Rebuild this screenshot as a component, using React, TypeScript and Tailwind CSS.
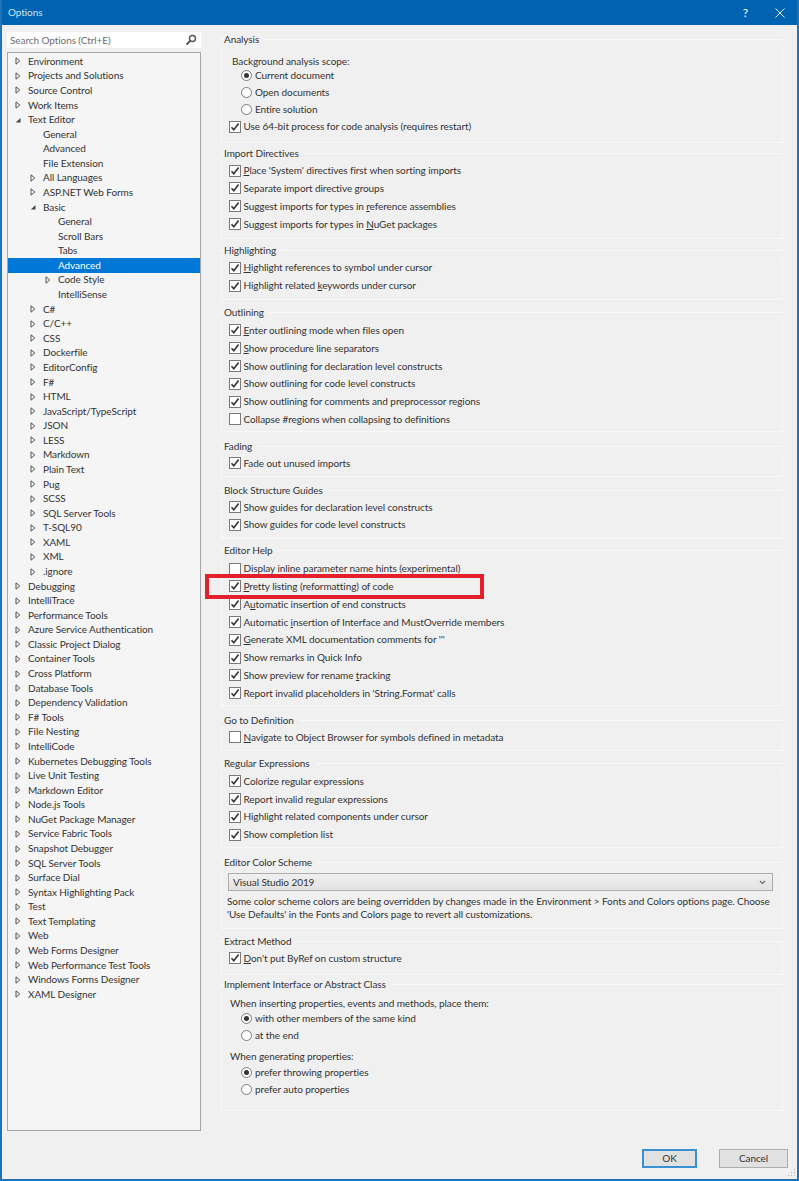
import type { ReactNode } from 'react';

const treeItems: [string, number, string?, boolean?][] = [
  ['Environment', 0, 'closed'],
  ['Projects and Solutions', 0, 'closed'],
  ['Source Control', 0, 'closed'],
  ['Work Items', 0, 'closed'],
  ['Text Editor', 0, 'open'],
  ['General', 1],
  ['Advanced', 1],
  ['File Extension', 1],
  ['All Languages', 1, 'closed'],
  ['ASP.NET Web Forms', 1, 'closed'],
  ['Basic', 1, 'open'],
  ['General', 2],
  ['Scroll Bars', 2],
  ['Tabs', 2],
  ['Advanced', 2, undefined, true],
  ['Code Style', 2, 'closed'],
  ['IntelliSense', 2],
  ['C#', 1, 'closed'],
  ['C/C++', 1, 'closed'],
  ['CSS', 1, 'closed'],
  ['Dockerfile', 1, 'closed'],
  ['EditorConfig', 1, 'closed'],
  ['F#', 1, 'closed'],
  ['HTML', 1, 'closed'],
  ['JavaScript/TypeScript', 1, 'closed'],
  ['JSON', 1, 'closed'],
  ['LESS', 1, 'closed'],
  ['Markdown', 1, 'closed'],
  ['Plain Text', 1, 'closed'],
  ['Pug', 1, 'closed'],
  ['SCSS', 1, 'closed'],
  ['SQL Server Tools', 1, 'closed'],
  ['T-SQL90', 1, 'closed'],
  ['XAML', 1, 'closed'],
  ['XML', 1, 'closed'],
  ['.ignore', 1, 'closed'],
  ['Debugging', 0, 'closed'],
  ['IntelliTrace', 0, 'closed'],
  ['Performance Tools', 0, 'closed'],
  ['Azure Service Authentication', 0, 'closed'],
  ['Classic Project Dialog', 0, 'closed'],
  ['Container Tools', 0, 'closed'],
  ['Cross Platform', 0, 'closed'],
  ['Database Tools', 0, 'closed'],
  ['Dependency Validation', 0, 'closed'],
  ['F# Tools', 0, 'closed'],
  ['File Nesting', 0, 'closed'],
  ['IntelliCode', 0, 'closed'],
  ['Kubernetes Debugging Tools', 0, 'closed'],
  ['Live Unit Testing', 0, 'closed'],
  ['Markdown Editor', 0, 'closed'],
  ['Node.js Tools', 0, 'closed'],
  ['NuGet Package Manager', 0, 'closed'],
  ['Service Fabric Tools', 0, 'closed'],
  ['Snapshot Debugger', 0, 'closed'],
  ['SQL Server Tools', 0, 'closed'],
  ['Surface Dial', 0, 'closed'],
  ['Syntax Highlighting Pack', 0, 'closed'],
  ['Test', 0, 'closed'],
  ['Text Templating', 0, 'closed'],
  ['Web', 0, 'closed'],
  ['Web Forms Designer', 0, 'closed'],
  ['Web Performance Test Tools', 0, 'closed'],
  ['Windows Forms Designer', 0, 'closed'],
  ['XAML Designer', 0, 'closed'],
];

// "&" marks the access key letter
const Label = ({ text }: { text: string }) => {
  const i = text.indexOf('&');
  if (i < 0) return <span>{text}</span>;
  return (
    <span>
      {text.slice(0, i)}
      <span className="underline">{text[i + 1]}</span>
      {text.slice(i + 2)}
    </span>
  );
};

const Check = ({ label, off }: { label: string; off?: boolean }) => (
  <div className="flex h-[17.8px] items-center pl-[7px]">
    <div className="flex h-[12px] w-[12px] items-center justify-center border border-[#7a7a7a] bg-white">
      {!off && (
        <svg width="10" height="10" viewBox="0 0 10 10" fill="none">
          <path d="M1.5 5.2 L3.8 7.8 L8.6 1.6" stroke="#333" strokeWidth="1.6" />
        </svg>
      )}
    </div>
    <div className="ml-[2.5px] whitespace-nowrap">
      <Label text={label} />
    </div>
  </div>
);

const Radio = ({ label, on }: { label: string; on?: boolean }) => (
  <div className="flex h-[17px] items-center pl-[19px]">
    <div className="flex h-[11px] w-[11px] items-center justify-center rounded-full border border-[#7a7a7a] bg-white">
      {on && <div className="h-[5px] w-[5px] rounded-full bg-[#333]" />}
    </div>
    <div className="ml-[3px] whitespace-nowrap">{label}</div>
  </div>
);

const Group = ({
  title,
  children,
  className,
}: {
  title: string;
  children: ReactNode;
  className?: string;
}) => (
  <div className={className}>
    <div className="flex h-[14px] items-center">
      <div className="h-px w-[3px] bg-[#fafafa]" />
      <div className="whitespace-nowrap pr-[5px]">{title}</div>
      <div className="h-px flex-1 bg-[#fafafa]" />
    </div>
    <div className="border-x border-b border-[#f8f8f8]">{children}</div>
  </div>
);

const TreeRow = ({ item }: { item: (typeof treeItems)[number] }) => {
  const [name, level, arrow, selected] = item;
  const indentClass = level === 0 ? 'pl-[4px]' : level === 1 ? 'pl-[19px]' : 'pl-[34px]';
  return (
    <div
      className={`flex h-[14.58px] items-center ${indentClass} ${
        selected ? 'bg-[#0078d7] text-white' : ''
      }`}
    >
      <div className="flex w-[16px] shrink-0 justify-start pl-[3px]">
        {arrow === 'closed' && (
          <svg width="6" height="8" viewBox="0 0 6 8" fill="none">
            <path d="M1 .8 L4.8 4 L1 7.2 Z" stroke="#555" strokeWidth="1" />
          </svg>
        )}
        {arrow === 'open' && (
          <svg width="6" height="8" viewBox="0 0 6 8">
            <path d="M5.5 2 V6.5 H.8 Z" fill="#444" />
          </svg>
        )}
      </div>
      <div className="whitespace-nowrap">{name}</div>
    </div>
  );
};

export default function App() {
  return (
    <div className="relative flex h-[1181px] w-[799px] flex-col overflow-hidden border-x-2 border-b-2 border-[#1f74b8] bg-[#f0f0f0] font-['Lato','Open_Sans',sans-serif] text-[10px] leading-[13px] tracking-[-0.08px] text-[#333]">
      <div className="-mx-[2px] flex h-[25px] shrink-0 items-center justify-between bg-[#0063b1] pl-[8px] pr-[14px] text-[#cfe3f5]">
        <div>Options</div>
        <div className="flex items-center gap-[27px] text-white">
          <span className="text-[12px]">?</span>
          <svg width="10" height="10" viewBox="0 0 10 10" fill="none">
            <path d="M.5 .5 L9.5 9.5 M9.5 .5 L.5 9.5" stroke="#e8f1f9" strokeWidth="1" />
          </svg>
        </div>
      </div>

      <div className="flex flex-1 pl-[5px] pr-[14px]">
        <div className="flex w-[194px] shrink-0 flex-col pt-[7px]">
          <div className="flex h-[16px] items-center justify-between bg-white pl-[3px] pr-[4px] text-[#6d6d6d]">
            <span>Search Options (Ctrl+E)</span>
            <svg width="12" height="12" viewBox="0 0 12 12" fill="none">
              <circle cx="7.5" cy="4.5" r="3" stroke="#555" strokeWidth="1.4" />
              <path d="M5.3 6.8 L1.5 10.6" stroke="#555" strokeWidth="2" />
            </svg>
          </div>
          <div className="mt-[4px] h-[1079px] border border-[#a6a6a6] bg-[#f5f5f5] pt-px">
            {treeItems.map((item, i) => (
              <TreeRow key={i} item={item} />
            ))}
          </div>
        </div>

        <div className="ml-[20px] flex-1 pt-[7px]">
          <Group title="Analysis">
            <div className="flex h-[23px] items-end pb-[1px] pl-[10px]">Background analysis scope:</div>
            <div className="mt-[-2px]">
              <Radio label="Current document" on />
              <Radio label="Open documents" />
              <Radio label="Entire solution" />
            </div>
            <Check label="Use 64-bit process for code analysis (requires restart)" />
            <div className="h-[6px]" />
          </Group>
          <Group title="Import Directives" className="mt-[4px]">
            <div className="h-px" />
            <Check label="&Place 'System' directives first when sorting imports" />
            <Check label="Separate import directive groups" />
            <Check label="Suggest imports for types in &reference assemblies" />
            <Check label="Suggest imports for types in &NuGet packages" />
            <div className="h-[5px]" />
          </Group>
          <Group title="Highlighting" className="mt-[5px]">
            <div className="h-px" />
            <Check label="&Highlight references to symbol under cursor" />
            <Check label="Highlight related &keywords under cursor" />
            <div className="h-[4px]" />
          </Group>
          <Group title="Outlining" className="mt-[6px]">
            <div className="h-[2px]" />
            <Check label="&Enter outlining mode when files open" />
            <Check label="&Show procedure line separators" />
            <Check label="Show outlining for declaration level constructs" />
            <Check label="Show outlining for code level constructs" />
            <Check label="Show outlining for comments and preprocessor regions" />
            <Check label="Collapse #regions when collapsing to definitions" off />
            <div className="h-[3px]" />
          </Group>
          <Group title="Fading" className="mt-[7px]">
            <div className="h-px" />
            <Check label="Fade out unused imports" />
            <div className="h-[4px]" />
          </Group>
          <Group title="Block Structure Guides" className="mt-[6px]">
            <div className="h-px" />
            <Check label="Show guides for declaration level constructs" />
            <Check label="Show guides for code level constructs" />
            <div className="h-[4px]" />
          </Group>
          <Group title="Editor Help" className="mt-[5px]">
            <div className="h-[2px]" />
            <Check label="Display inline parameter name hints (experimental)" off />
            <Check label="&Pretty listing (reformatting) of code" />
            <Check label="A&utomatic insertion of end constructs" />
            <Check label="Automatic &insertion of Interface and MustOverride members" />
            <Check label="&Generate XML documentation comments for '''" />
            <Check label="Show remarks in Quick Info" />
            <Check label="Show preview for rename &tracking" />
            <Check label="Report invalid placeholders in 'String.Format' calls" />
            <div className="h-[3px]" />
          </Group>
          <Group title="Go to Definition" className="mt-[7px]">
            <div className="h-px" />
            <Check label="&Navigate to Object Browser for symbols defined in metadata" off />
            <div className="h-[4px]" />
          </Group>
          <Group title="Regular Expressions" className="mt-[6px]">
            <div className="h-[1.5px]" />
            <Check label="Colorize regular expressions" />
            <Check label="Report invalid regular expressions" />
            <Check label="Highlight related components under cursor" />
            <Check label="Show completion list" />
            <div className="h-[3.5px]" />
          </Group>
          <Group title="Editor Color Scheme" className="mt-[7px]">
            <div className="ml-[6px] mr-[9px] mt-[4px] flex h-[18px] items-center justify-between border border-[#acacac] bg-gradient-to-b from-[#f0f0f0] to-[#e2e2e2] pl-[4px] pr-[6px]">
              <span>Visual Studio 2019</span>
              <svg width="7" height="5" viewBox="0 0 7 5" fill="none">
                <path d="M1 1 L3.5 3.5 L6 1" stroke="#666" strokeWidth="1.2" />
              </svg>
            </div>
            <div className="ml-[5px] mr-[8px] mt-[4px]">
              Some color scheme colors are being overridden by changes made in the Environment &gt; Fonts and Colors options page. Choose 'Use Defaults' in the Fonts and Colors page to revert all customizations.
            </div>
            <div className="h-[7px]" />
          </Group>
          <Group title="Extract Method" className="mt-[5px]">
            <div className="h-px" />
            <Check label="&Don't put ByRef on custom structure" />
            <div className="h-[7px]" />
          </Group>
          <Group title="Implement Interface or Abstract Class" className="mt-[3px]">
            <div className="flex h-[18px] items-end pl-[8px]">When inserting properties, events and methods, place them:</div>
            <Radio label="with other members of the same kind" on />
            <Radio label="at the end" />
            <div className="flex h-[20px] items-end pb-[1px] pl-[8px]">When generating properties:</div>
            <Radio label="prefer throwing properties" on />
            <Radio label="prefer auto properties" />
            <div className="h-[12px]" />
          </Group>
          <div className="mt-[38px] -mr-[5px] flex justify-end gap-[22px]">
            <div className="flex h-[19px] w-[55px] items-center justify-center border-2 border-[#3a8fd0] bg-[#e1e1e1]">OK</div>
            <div className="flex h-[19px] w-[69px] items-center justify-center border border-[#adadad] bg-[#e1e1e1]">Cancel</div>
          </div>
        </div>
      </div>

      <div className="absolute left-[203px] top-[574px] h-[25px] w-[279px] border-4 border-[#e3202c]" />
      <svg className="absolute bottom-[2px] right-[1px]" width="8" height="8" viewBox="0 0 8 8" fill="#b5b5b5">
        <rect x="6" y="0" width="1" height="1" />
        <rect x="3" y="3" width="1" height="1" />
        <rect x="6" y="3" width="1" height="1" />
        <rect x="0" y="6" width="1" height="1" />
        <rect x="3" y="6" width="1" height="1" />
        <rect x="6" y="6" width="1" height="1" />
      </svg>
    </div>
  );
}
